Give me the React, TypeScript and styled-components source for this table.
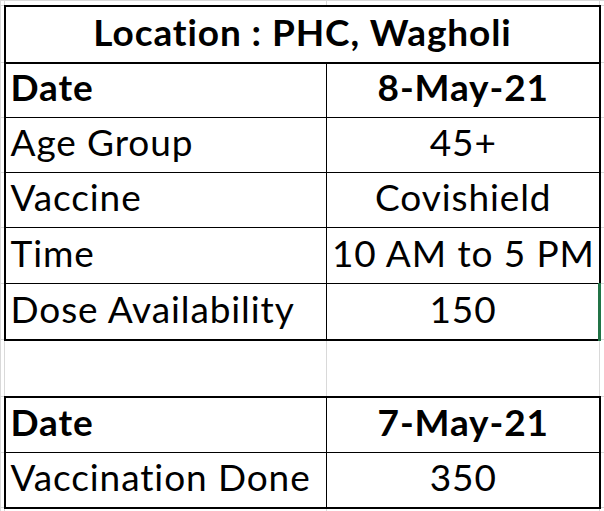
import React from "react"
import styled, { createGlobalStyle, css } from "styled-components"

type Edge = "thin" | "thick" | "green" | undefined

const GlobalStyle = createGlobalStyle`
  html, body {
    margin: 0;
    padding: 0;
    background: #ffffff;
  }
  body {
    font-family: Lato, "Liberation Sans", sans-serif;
    color: #000000;
  }
`

const edgeCss = (edge: Edge) => {
  if (edge === "thick") return "2px solid #000000"
  if (edge === "thin") return "1px solid #000000"
  if (edge === "green") return "3px solid #217346"
  return "1px solid #d9d9d9"
}

const Sheet = styled.table`
  border-collapse: collapse;
  table-layout: fixed;
  width: 604px;
`

const Row = styled.tr<{ $height: number }>`
  height: ${({ $height }) => $height}px;
`

const Cell = styled.td<{
  $bold?: boolean
  $center?: boolean
  $top?: Edge
  $bottom?: Edge
  $left?: Edge
  $right?: Edge
}>`
  padding: 0 4px 10px 5px;
  vertical-align: bottom;
  font-size: 37px;
  line-height: 40px;
  letter-spacing: 0.9px;
  white-space: nowrap;
  overflow: hidden;
  font-weight: ${({ $bold }) => ($bold ? 700 : 400)};
  text-align: ${({ $center }) => ($center ? "center" : "left")};
  ${({ $top, $bottom, $left, $right }) => css`
    border-top: ${edgeCss($top)};
    border-bottom: ${edgeCss($bottom)};
    border-left: ${edgeCss($left)};
    border-right: ${edgeCss($right)};
  `}
`

const EdgeCell = styled.td`
  padding: 0;
  border: 1px solid #d9d9d9;
`

type Line = { label: string; value: string; bold?: boolean; last?: boolean; first?: boolean }

const schedule: Line[] = [
  { label: "Date", value: "8-May-21", bold: true },
  { label: "Age Group", value: "45+" },
  { label: "Vaccine", value: "Covishield" },
  { label: "Time", value: "10 AM to 5 PM" },
  { label: "Dose Availability", value: "150", last: true },
]

const done: Line[] = [
  { label: "Date", value: "7-May-21", bold: true, first: true },
  { label: "Vaccination Done", value: "350", last: true },
]

const heights = [55, 55, 55, 56, 56]

const DataRow = ({ line, height, selected }: { line: Line; height: number; selected?: boolean }) => (
  <Row $height={height}>
    <EdgeCell />
    <Cell
      $bold={line.bold}
      $left="thick"
      $right="thin"
      $top={line.first ? "thick" : "thin"}
      $bottom={line.last ? "thick" : "thin"}
    >
      {line.label}
    </Cell>
    <Cell
      $bold={line.bold}
      $center
      $left="thin"
      $right={selected ? "green" : "thick"}
      $top={line.first ? "thick" : "thin"}
      $bottom={line.last ? "thick" : "thin"}
    >
      {line.value}
    </Cell>
    <EdgeCell />
  </Row>
)

export default function App() {
  return (
    <>
      <GlobalStyle />
      <Sheet>
        <colgroup>
          <col style={{ width: 4 }} />
          <col style={{ width: 322 }} />
          <col style={{ width: 273 }} />
          <col style={{ width: 5 }} />
        </colgroup>
        <tbody>
          <Row $height={5}>
            <EdgeCell />
            <EdgeCell />
            <EdgeCell />
            <EdgeCell />
          </Row>
          <Row $height={57}>
            <EdgeCell />
            <Cell colSpan={2} $bold $center $top="thick" $bottom="thick" $left="thick" $right="thick">
              Location : PHC, Wagholi
            </Cell>
            <EdgeCell />
          </Row>
          {schedule.map((line, i) => (
            <DataRow key={line.label} line={line} height={heights[i]} selected={line.last} />
          ))}
          <Row $height={57}>
            <EdgeCell />
            <EdgeCell />
            <EdgeCell />
            <EdgeCell />
          </Row>
          {done.map((line, i) => (
            <DataRow key={line.label} line={line} height={i === 0 ? 56 : 55} />
          ))}
          <Row $height={10}>
            <EdgeCell />
            <EdgeCell />
            <EdgeCell />
            <EdgeCell />
          </Row>
        </tbody>
      </Sheet>
    </>
  )
}
